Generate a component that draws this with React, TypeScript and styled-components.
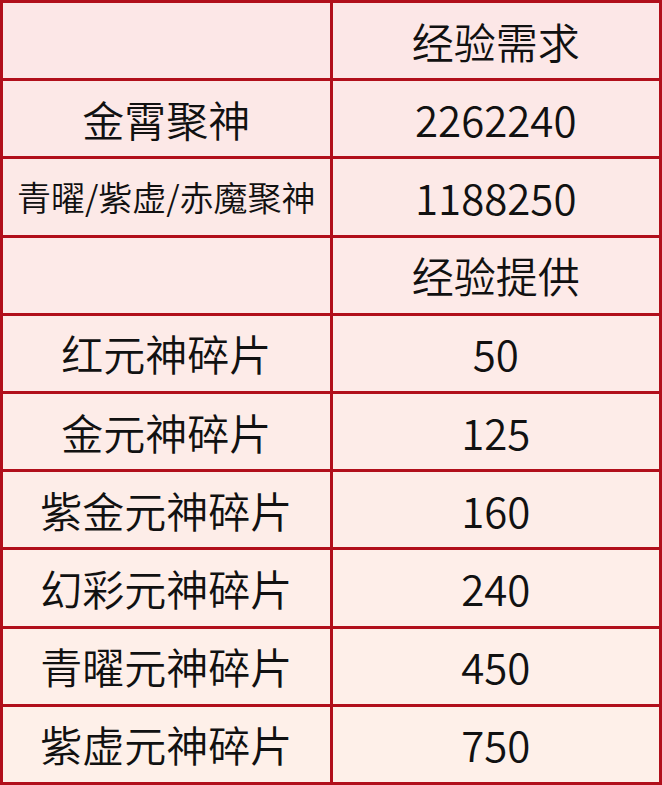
import React from 'react';
import styled, { createGlobalStyle } from 'styled-components';

const GlobalStyle = createGlobalStyle`
  html, body {
    margin: 0;
    padding: 0;
    background: #fff;
  }
`;

const Table = styled.div`
  width: 662px;
  height: 785px;
  box-sizing: border-box;
  display: grid;
  grid-template-columns: 1fr 1fr;
  grid-template-rows: repeat(10, 1fr);
  gap: 3px;
  padding: 3px;
  background: #b10f1b;
  font-family: "Noto Sans CJK SC", "Noto Sans", sans-serif;
  font-weight: 350;
  color: #111;
`;

// pink at the top fading to a peach tone at the bottom
const tone = (row: number) => {
  const t = row / 9;
  const mix = (a: number, b: number) => Math.round(a + (b - a) * t);
  return `rgb(${mix(252, 254)}, ${mix(231, 240)}, ${mix(231, 233)})`;
};

const Cell = styled.div<{ $row: number; $small?: boolean }>`
  background: ${(p) => tone(p.$row)};
  display: flex;
  align-items: center;
  justify-content: center;
  font-size: ${(p) => (p.$small ? '34px' : '42px')};
  line-height: 1;
  white-space: nowrap;
`;

const rows: [string, string, boolean?][] = [
  ['', '经验需求'],
  ['金霄聚神', '2262240'],
  ['青曜/紫虚/赤魔聚神', '1188250', true],
  ['', '经验提供'],
  ['红元神碎片', '50'],
  ['金元神碎片', '125'],
  ['紫金元神碎片', '160'],
  ['幻彩元神碎片', '240'],
  ['青曜元神碎片', '450'],
  ['紫虚元神碎片', '750'],
];

export default function App() {
  return (
    <>
      <GlobalStyle />
      <Table>
        {rows.map(([name, value, small], i) => (
          <React.Fragment key={i}>
            <Cell $row={i} $small={small}>{name}</Cell>
            <Cell $row={i}>{value}</Cell>
          </React.Fragment>
        ))}
      </Table>
    </>
  );
}
